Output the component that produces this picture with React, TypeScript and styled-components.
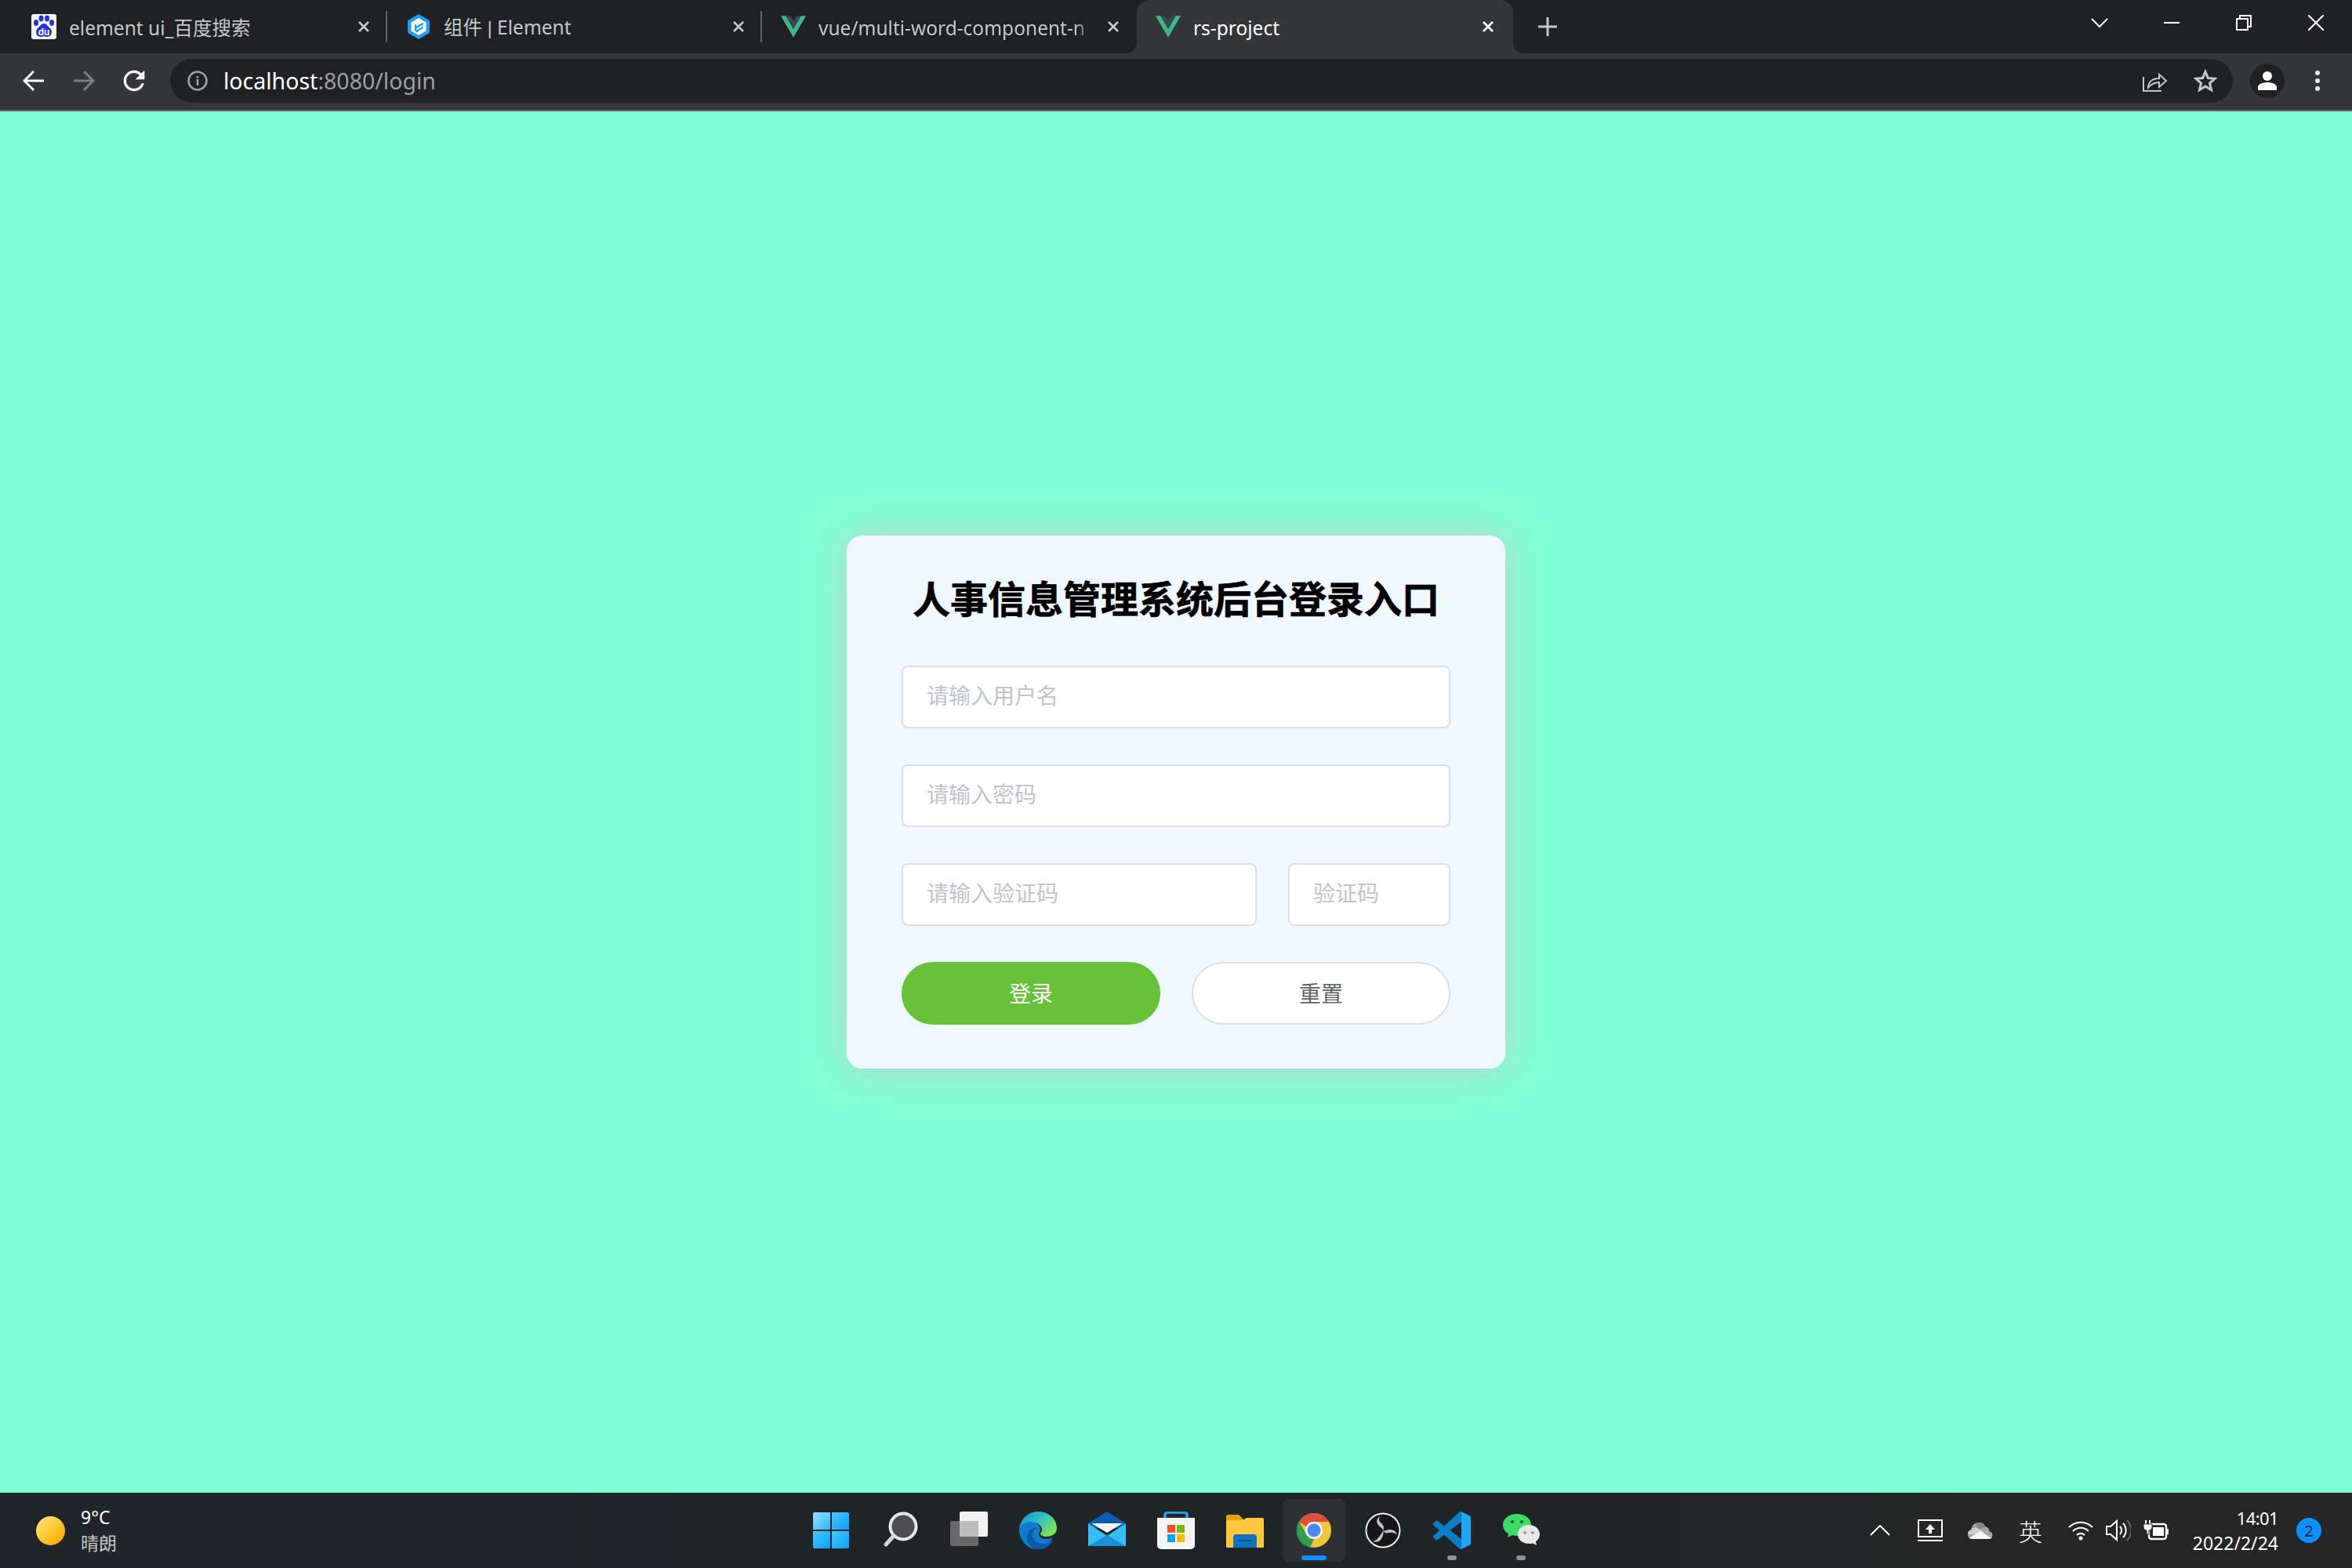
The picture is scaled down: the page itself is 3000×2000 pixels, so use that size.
import React from 'react';
import styled, { createGlobalStyle } from 'styled-components';

const GlobalStyle = createGlobalStyle`
  html, body {
    margin: 0;
    padding: 0;
    background: #7fffd4;
  }
  * {
    box-sizing: border-box;
  }
`;

const UI_FONT = `"Noto Sans", "Noto Sans CJK SC", sans-serif`;
const CJK_FONT = `"Liberation Sans", "Noto Sans CJK SC", sans-serif`;

const Screen = styled.div`
  width: 3000px;
  height: 2000px;
  display: flex;
  flex-direction: column;
  overflow: hidden;
  font-family: ${UI_FONT};
`;

/* ---- browser chrome ---- */

const TabStrip = styled.div`
  height: 68px;
  flex: none;
  display: flex;
  align-items: stretch;
  padding-left: 16px;
  background: #202124;
`;

const Tab = styled.div<{ $active?: boolean; $divider?: boolean }>`
  position: relative;
  width: ${p => (p.$active ? 480 : 478)}px;
  display: flex;
  align-items: center;
  padding-left: 24px;
  padding-right: ${p => (p.$active ? 24 : p.$divider ? 0 : 22)}px;
  color: ${p => (p.$active ? '#ffffff' : '#c4c7cb')};
  background: ${p => (p.$active ? '#35363a' : 'transparent')};
  border-radius: ${p => (p.$active ? '16px 16px 0 0' : '0')};

  ${p =>
    p.$active &&
    `
    &::before, &::after {
      content: '';
      position: absolute;
      bottom: 0;
      width: 14px;
      height: 14px;
    }
    &::before {
      left: -14px;
      background: radial-gradient(circle at 0 0, transparent 14px, #35363a 14.5px);
    }
    &::after {
      right: -14px;
      background: radial-gradient(circle at 100% 0, transparent 14px, #35363a 14.5px);
    }
  `}
`;

const Favicon = styled.svg`
  width: 32px;
  height: 32px;
  flex: none;
  margin-right: 16px;
`;

const TabTitle = styled.div<{ $fade?: boolean }>`
  flex: 1;
  min-width: 0;
  margin-right: 17px;
  padding-top: 3px;
  font-size: 24.5px;
  line-height: 32px;
  white-space: nowrap;
  overflow: hidden;
  ${p =>
    p.$fade &&
    `mask-image: linear-gradient(to right, #000 calc(100% - 24px), transparent);`}
`;

const TitlePipe = styled.span`
  font-family: "Liberation Sans", sans-serif;
`;

const TabClose = styled.svg`
  width: 16px;
  height: 16px;
  flex: none;
`;

const TabDivider = styled.div`
  width: 2px;
  height: 40px;
  flex: none;
  margin-left: 20px;
  background: #5f6368;
`;

const NewTab = styled.svg`
  width: 24px;
  height: 24px;
  margin-left: 32px;
  align-self: center;
`;

const WindowControls = styled.div`
  margin-left: auto;
  display: flex;
`;

const WindowButton = styled.div`
  width: 92px;
  height: 58px;
  display: flex;
  align-items: center;
  justify-content: center;
`;

const Toolbar = styled.div`
  height: 74px;
  flex: none;
  display: flex;
  align-items: center;
  padding: 0 12px 2px 11px;
  gap: 12px;
  background: #35363a;
  border-bottom: 2px solid #5c5f63;
`;

const NavGroup = styled.div`
  display: flex;
`;

const ToolButton = styled.div`
  width: 64px;
  height: 56px;
  display: flex;
  align-items: center;
  justify-content: center;
`;

const AddressBar = styled.div`
  flex: 1;
  height: 56px;
  margin-left: 2px;
  display: flex;
  align-items: center;
  padding: 0 3px 0 22px;
  border-radius: 28px;
  background: #202124;
`;

const Url = styled.div`
  margin-left: 20px;
  font-size: 28.5px;
  line-height: 40px;
  color: #9aa0a6;
`;

const UrlHost = styled.span`
  color: #ffffff;
`;

const AddressActions = styled.div`
  margin-left: auto;
  display: flex;
`;

const Avatar = styled.div`
  width: 44px;
  height: 44px;
  border-radius: 50%;
  display: flex;
  align-items: center;
  justify-content: center;
  background: #202124;
`;

const MenuDots = styled.div`
  display: flex;
  flex-direction: column;
  gap: 4px;
`;

const MenuDot = styled.div`
  width: 6px;
  height: 6px;
  border-radius: 50%;
  background: #e8eaed;
`;

/* ---- login page ---- */

const Page = styled.main`
  flex: 1;
  display: flex;
  align-items: center;
  justify-content: center;
  background: #7fffd4;
`;

const LoginCard = styled.form`
  width: 840px;
  height: 680px;
  padding: 51px 70px 0;
  border-radius: 20px;
  background: #f0f8ff;
  box-shadow: 0 0 50px #c6cfcc;
`;

const Heading = styled.h1`
  margin: 0 0 51px;
  font-family: ${CJK_FONT};
  font-size: 48px;
  line-height: 64px;
  font-weight: 700;
  text-align: center;
  color: #000000;
  -webkit-text-stroke: 0.7px #000000;
`;

const Fields = styled.div`
  display: flex;
  flex-direction: column;
  gap: 46px;
`;

const CaptchaRow = styled.div`
  display: grid;
  grid-template-columns: 1fr 207px;
  gap: 40px;
`;

const ActionRow = styled.div`
  display: grid;
  grid-template-columns: 1fr 1fr;
  gap: 40px;
`;

const TextInput = styled.input`
  width: 100%;
  height: 80px;
  padding: 0 30px;
  border: 2px solid #dcdfe6;
  border-radius: 8px;
  outline: none;
  background: #ffffff;
  font-family: ${CJK_FONT};
  font-size: 28px;
  color: #606266;

  &::placeholder {
    color: #c0c4cc;
    opacity: 1;
  }
`;

const PillButton = styled.button<{ $primary?: boolean }>`
  height: 80px;
  padding: 0 0 2px;
  border-radius: 40px;
  border: 2px solid ${p => (p.$primary ? '#67c23a' : '#dcdfe6')};
  background: ${p => (p.$primary ? '#67c23a' : '#ffffff')};
  color: ${p => (p.$primary ? '#ffffff' : '#606266')};
  font-family: ${CJK_FONT};
  font-size: 28px;
`;

/* ---- windows taskbar ---- */

const Taskbar = styled.footer`
  height: 96px;
  flex: none;
  display: grid;
  grid-template-columns: 1fr auto 1fr;
  align-items: center;
  background: linear-gradient(to right, #1f2528 0%, #1f2427 60%, #262626 85%);
`;

const Weather = styled.div`
  display: flex;
  align-items: center;
  padding-left: 46px;
  gap: 20px;
`;

const SunIcon = styled.div`
  width: 37px;
  height: 37px;
  border-radius: 50%;
  background: linear-gradient(135deg, #ffe27a 10%, #ffc934 50%, #ff9d00 95%);
`;

const WeatherText = styled.div`
  font-size: 23px;
  line-height: 33px;
  color: #ffffff;
`;

const WeatherNote = styled.div`
  color: #c8c8c8;
`;

const AppList = styled.div`
  display: flex;
`;

const AppSlot = styled.div<{ $running?: boolean }>`
  position: relative;
  width: 80px;
  height: 80px;
  margin: 0 4px;
  display: flex;
  align-items: center;
  justify-content: center;
  border-radius: 8px;
  background: ${p => (p.$running ? '#2d3134' : 'transparent')};
`;

const AppIcon = styled.svg`
  width: 48px;
  height: 48px;
`;

const RunDot = styled.div<{ $focused?: boolean }>`
  position: absolute;
  bottom: 2px;
  left: 50%;
  width: ${p => (p.$focused ? 32 : 12)}px;
  height: 6px;
  margin-left: ${p => (p.$focused ? -16 : -6)}px;
  border-radius: 3px;
  background: ${p => (p.$focused ? '#0a90ff' : '#8f9193')};
`;

const Tray = styled.div`
  display: flex;
  align-items: center;
  justify-content: flex-end;
  padding-right: 39px;
`;

const TraySlot = styled.div<{ $narrow?: boolean }>`
  width: ${p => (p.$narrow ? 48 : 64)}px;
  height: 48px;
  display: flex;
  align-items: center;
  justify-content: center;
`;

const ImeLabel = styled.div`
  font-family: "Noto Sans CJK SC", sans-serif;
  font-weight: 300;
  font-size: 30px;
  line-height: 48px;
  color: #ffffff;
`;

const WideTray = styled.div`
  display: flex;
  margin-left: 8px;
`;

const Clock = styled.div`
  margin-left: 20px;
  width: 112px;
  text-align: right;
  font-size: 23px;
  line-height: 32px;
  color: #ffffff;
  white-space: nowrap;
`;

const ClockTime = styled.div`
  font-size: 22px;
  letter-spacing: -0.6px;
`;

const Badge = styled.div`
  width: 32px;
  height: 32px;
  margin-left: 23px;
  border-radius: 50%;
  display: flex;
  align-items: center;
  justify-content: center;
  background: #0a90ff;
  color: #10243a;
  font-size: 20px;
`;

/* ---- drawings ---- */

const BaiduIcon = () => (
  <Favicon viewBox="0 0 32 32">
    <rect width="32" height="32" rx="3" fill="#fff" />
    <g fill="#2932e1">
      <ellipse cx="6" cy="11" rx="3" ry="4" />
      <ellipse cx="12.5" cy="5.5" rx="3" ry="4" />
      <ellipse cx="20" cy="5.5" rx="3" ry="4" />
      <ellipse cx="26" cy="11" rx="3" ry="4" />
      <path d="M16 12c-4 0-5 4-8 6-3 3-3 10 3 11 2 .5 3-.5 5-.5s3 1 5 .5c6-1 6-8 3-11-3-2-4-6-8-6z" />
    </g>
    <text x="16" y="27" textAnchor="middle" fontSize="12" fontWeight="700" fontFamily="Liberation Sans, sans-serif" fill="#fff">
      du
    </text>
  </Favicon>
);

const ElementIcon = () => (
  <Favicon viewBox="0 0 32 32">
    <path d="M16 0l13 7.500a2 2 0 0 1 1 1.700v13.600a2 2 0 0 1-1 1.700L16 32 3 24.500a2 2 0 0 1-1-1.700V9.200a2 2 0 0 1 1-1.700z" fill="#1e9ef5" />
    <path d="M16 5l9.500 5.500v11L16 27l-9.500-5.500v-11z" fill="#fff" />
    <path d="M22 10.500l-9 5v3l9-5zM22 15.500l-9 5v2.500l9-5z" fill="#1e9ef5" />
    <path d="M12 13v8l3 2" stroke="#1e9ef5" strokeWidth="2" fill="none" />
  </Favicon>
);

const VueIcon = () => (
  <Favicon viewBox="0 0 256 256">
    <g transform="translate(0 18)">
      <path d="M204.800 0H256L128 220.800 0 0h50.560L128 132.480 204.800 0z" fill="#41b883" />
      <path d="M50.560 0L128 133.120 204.800 0h-47.360L128 51.200 97.920 0H50.560z" fill="#35495e" />
    </g>
  </Favicon>
);

const CloseIcon = () => (
  <TabClose viewBox="0 0 16 16">
    <path d="M2 2l12 12M14 2L2 14" stroke="currentColor" strokeWidth="2.600" fill="none" />
  </TabClose>
);

const ArrowIcon = ({ color, flip }: { color: string; flip?: boolean }) => (
  <svg width="28" height="28" viewBox="0 0 28 28" style={flip ? { transform: 'scaleX(-1)' } : undefined}>
    <path d="M27 14H3M14 2L2 14l12 12" stroke={color} strokeWidth="3" fill="none" />
  </svg>
);

const ReloadIcon = () => (
  <svg width="40" height="40" viewBox="0 0 24 24" fill="#ffffff">
    <path d="M17.650 6.350A7.958 7.958 0 0 0 12 4c-4.420 0-7.990 3.580-7.990 8s3.570 8 7.990 8c3.730 0 6.840-2.550 7.730-6h-2.080A5.990 5.990 0 0 1 12 18c-3.310 0-6-2.690-6-6s2.690-6 6-6c1.660 0 3.140.690 4.220 1.780L13 11h7V4l-2.350 2.350z" />
  </svg>
);

const InfoIcon = () => (
  <svg width="26" height="26" viewBox="0 0 26 26">
    <circle cx="13" cy="13" r="11.500" stroke="#a0a3a7" strokeWidth="2.500" fill="none" />
    <rect x="11.700" y="11" width="2.600" height="8" fill="#a0a3a7" />
    <rect x="11.700" y="7" width="2.600" height="2.600" fill="#a0a3a7" />
  </svg>
);

const ShareIcon = () => (
  <svg width="32" height="30" viewBox="0 0 32 30" fill="none" stroke="#c4c7cb" strokeWidth="2">
    <path d="M1 10v18h23" />
    <path d="M7 24c0-8 6-12 14-12V7l9 8-9 8v-6c-6 0-10 2-14 7z" />
  </svg>
);

const StarIcon = () => (
  <svg width="30" height="30" viewBox="0 0 30 30">
    <path
      d="M15 3.500l3.400 8.100 8.800.7-6.700 5.800 2 8.600L15 22.100l-7.500 4.600 2-8.600-6.700-5.800 8.800-.7z"
      fill="none"
      stroke="#c4c7cb"
      strokeWidth="3"
    />
  </svg>
);

const PersonIcon = () => (
  <svg width="26" height="26" viewBox="0 0 26 26" fill="#ffffff">
    <circle cx="13" cy="7" r="6" />
    <path d="M1 25v-4c0-4 7-6 12-6s12 2 12 6v4z" />
  </svg>
);

const WindowsLogo = () => (
  <AppIcon viewBox="0 0 48 48">
    <defs>
      <linearGradient id="winA" x1="0" y1="0" x2="1" y2="1">
        <stop offset="0" stopColor="#9be2ff" />
        <stop offset="1" stopColor="#29b6fb" />
      </linearGradient>
      <linearGradient id="winB" x1="0" y1="0" x2="1" y2="1">
        <stop offset="0" stopColor="#45cbff" />
        <stop offset="1" stopColor="#0f9cfa" />
      </linearGradient>
    </defs>
    <path d="M1 3a2 2 0 0 1 2-2h20v22H1z" fill="url(#winA)" />
    <path d="M25 1h20a2 2 0 0 1 2 2v20H25z" fill="url(#winB)" />
    <path d="M1 25h22v22H3a2 2 0 0 1-2-2z" fill="url(#winB)" />
    <path d="M25 25h22v20a2 2 0 0 1-2 2H25z" fill="url(#winB)" />
  </AppIcon>
);

const SearchLogo = () => (
  <AppIcon viewBox="0 0 48 48">
    <circle cx="28" cy="19" r="16.500" fill="#4d4f53" stroke="#e8e8e8" strokeWidth="4" />
    <path d="M15 32L6 42" stroke="#d8d8d8" strokeWidth="5" strokeLinecap="round" />
  </AppIcon>
);

const TaskViewLogo = () => (
  <AppIcon viewBox="0 0 48 48">
    <rect x="0" y="12" width="36" height="32" rx="2" fill="#69696b" />
    <rect x="12" y="0" width="36" height="32" rx="2" fill="#f2f2f2" />
    <rect x="12" y="12" width="24" height="20" fill="#bcbcbc" />
  </AppIcon>
);

const EdgeLogo = () => (
  <AppIcon viewBox="0 0 48 48">
    <defs>
      <linearGradient id="edgeTop" x1="0" y1="0" x2="1" y2="0.600">
        <stop offset="0" stopColor="#0f8dc8" />
        <stop offset="0.550" stopColor="#2fc2c0" />
        <stop offset="1" stopColor="#7fe05a" />
      </linearGradient>
    </defs>
    <path d="M24 0c13 0 24 9 24 21 0 7-6 11-13 11-5 0-8-2-8-4 0-1 2-2 2-5 0-5-5-9-11-9S1 18 0 23C1 10 11 0 24 0z" fill="url(#edgeTop)" />
    <path d="M0 23c1-6 8-10 14-10 7 0 13 4 13 10 0 2-2 4-2 6 0 4 5 6 10 6 3 0 6-1 8-2-4 9-12 15-21 15C10 48 0 36 0 23z" fill="#0f7bcf" />
    <path d="M18 47c-5-3-8-9-8-15 0-7 6-12 13-11-4 2-6 5-6 9 0 6 6 11 14 11 4 0 8-1 12-3-4 6-10 10-18 10-3 0-5 0-7-1z" fill="#0c59a4" />
  </AppIcon>
);

const MailLogo = () => (
  <AppIcon viewBox="0 0 48 48">
    <path d="M0 15L24 0l24 15v6H0z" fill="#0b5cad" />
    <path d="M4 15h40L24 27z" fill="#f2f4f6" />
    <path d="M0 15l24 16 24-16v29H0z" fill="#36bdf3" />
    <path d="M0 44l24-14 24 14z" fill="#1a8fdc" />
  </AppIcon>
);

const StoreLogo = () => (
  <AppIcon viewBox="0 0 48 48">
    <path d="M10 10V4a3 3 0 0 1 3-3h22a3 3 0 0 1 3 3v6" fill="none" stroke="#25a3e8" strokeWidth="3.500" />
    <path d="M0 8h48v35a5 5 0 0 1-5 5H5a5 5 0 0 1-5-5z" fill="#f4f4f4" />
    <rect x="13" y="17" width="10" height="10" fill="#f25022" />
    <rect x="25" y="17" width="10" height="10" fill="#7fba00" />
    <rect x="13" y="29" width="10" height="10" fill="#00a4ef" />
    <rect x="25" y="29" width="10" height="10" fill="#ffb900" />
  </AppIcon>
);

const FolderLogo = () => (
  <AppIcon viewBox="0 0 48 48">
    <path d="M0 6a2 2 0 0 1 2-2h14l6 6v6H0z" fill="#e3a008" />
    <path d="M0 11h21l5-3h20a2 2 0 0 1 2 2v35a1 1 0 0 1-1 1H1a1 1 0 0 1-1-1z" fill="#fdc73f" />
    <path d="M9 46V33a4 4 0 0 1 4-4h22a4 4 0 0 1 4 4v13z" fill="#1273bf" />
    <rect x="15" y="36" width="18" height="2" fill="#0c4f87" />
  </AppIcon>
);

const ChromeLogo = () => (
  <AppIcon viewBox="0 0 48 48">
    <circle cx="24" cy="24" r="22" fill="#f0c53a" />
    <path d="M24 2a22 22 0 0 1 19 11H24a11 11 0 0 0-10 6L5 13A22 22 0 0 1 24 2z" fill="#d9503f" />
    <path d="M5 13l10 17a11 11 0 0 0 9 5l-5 11A22 22 0 0 1 5 13z" fill="#2f9e53" />
    <circle cx="24" cy="24" r="11" fill="#f5f5f5" />
    <circle cx="24" cy="24" r="8.500" fill="#4a88ee" />
  </AppIcon>
);

const ObsLogo = () => (
  <AppIcon viewBox="0 0 48 48">
    <circle cx="24" cy="24" r="21.500" fill="#17171a" stroke="#efefef" strokeWidth="2" />
    <g fill="#c4c4c4">
      <path d="M20 6c-7 5-3 11 1 14 2 1.500 3 3 3 4 2-3 1-6-2-9-3-2-4-5-2-9z" />
      <path d="M42 30c-2-8-9-8-14-6-2 1-3 1-4 0 1 3 4 4 8 3 4-1 7 0 10 3z" />
      <path d="M11 38c8 3 12-3 13-8 .5-2 1-4 0-6-1 3-3 6-5 8-2 3-5 6-8 6z" />
    </g>
  </AppIcon>
);

const CodeLogo = () => (
  <AppIcon viewBox="0 0 24 24">
    <path
      d="M23.150 2.587L18.210.21a1.494 1.494 0 0 0-1.705.29l-9.460 8.630-4.120-3.128a.999.999 0 0 0-1.276.057L.327 7.261A1 1 0 0 0 .326 8.740L3.899 12 .326 15.260a1 1 0 0 0 .001 1.479L1.650 17.940a.999.999 0 0 0 1.276.057l4.120-3.128 9.460 8.630a1.492 1.492 0 0 0 1.704.29l4.942-2.377A1.500 1.500 0 0 0 24 20.060V3.939a1.500 1.500 0 0 0-.850-1.352zm-5.146 14.861L10.826 12l7.178-5.448v10.896z"
      fill="#0d7cc6"
    />
    <path
      d="M18 .1l5.150 2.487A1.500 1.500 0 0 1 24 3.940V20.060a1.500 1.500 0 0 1-.850 1.350L18 23.900z"
      fill="#22a6f2"
    />
  </AppIcon>
);

const WeChatLogo = () => (
  <AppIcon viewBox="0 0 48 48">
    <path d="M19 3C9 3 1 9 1 17c0 5 3 9 7 11l-1 5 6-3c2 .5 4 1 6 1 10 0 18-6 18-14S29 3 19 3z" fill="#3ddc68" />
    <circle cx="13" cy="13" r="2" fill="#14592b" />
    <circle cx="25" cy="13" r="2" fill="#14592b" />
    <path d="M34 17c-8 0-14 5-14 12s6 12 14 12c2 0 3 0 5-.5l5 2.500-1-5c3-2 5-5 5-9 0-7-6-12-14-12z" fill="#e9e9e9" />
    <circle cx="29" cy="27" r="1.800" fill="#8a8a8a" />
    <circle cx="39" cy="27" r="1.800" fill="#8a8a8a" />
  </AppIcon>
);

const UploadTrayIcon = () => (
  <svg width="32" height="28" viewBox="0 0 32 28" fill="none" stroke="#ffffff" strokeWidth="2">
    <rect x="1" y="1" width="30" height="21" />
    <path d="M0 27h32" />
    <path d="M16 6l6 7h-4v5h-4v-5h-4z" fill="#ffffff" stroke="none" />
  </svg>
);

const CloudTrayIcon = () => (
  <svg width="32" height="22" viewBox="0 0 32 22">
    <clipPath id="cloudShape">
      <path d="M6 22a6 6 0 0 1-1.500-11.800A9 9 0 0 1 14 1a8 8 0 0 1 8 5 7 7 0 0 1 5.500 6.500A4.800 4.800 0 0 1 27 22z" />
    </clipPath>
    <g clipPath="url(#cloudShape)">
      <rect width="32" height="22" fill="#a6a6a6" />
      <path d="M0 8h14l8 8H0z" fill="#cfcfcf" />
      <path d="M8 0h10l6 6-10 4z" fill="#858585" />
      <path d="M0 22l16-10 16 10z" fill="#f6f6f6" />
    </g>
  </svg>
);

const WifiTrayIcon = () => (
  <svg width="32" height="28" viewBox="0 0 32 28" fill="none" stroke="#ffffff" strokeWidth="2">
    <path d="M1 10a21 21 0 0 1 30 0" />
    <path d="M6 15a14 14 0 0 1 20 0" />
    <path d="M11 20a7 7 0 0 1 10 0" />
    <circle cx="16" cy="24" r="2.500" fill="#ffffff" stroke="none" />
  </svg>
);

const SpeakerTrayIcon = () => (
  <svg width="32" height="30" viewBox="0 0 32 30" fill="none" stroke="#ffffff" strokeWidth="2">
    <path d="M1 10h5l8-7v24l-8-7H1z" />
    <path d="M18 10a7 7 0 0 1 0 10" />
    <path d="M22 6a13 13 0 0 1 0 18" />
    <path d="M27 2a19 19 0 0 1 0 26" stroke="#666666" />
  </svg>
);

const BatteryTrayIcon = () => (
  <svg width="32" height="26" viewBox="0 0 32 26">
    <rect x="7" y="5" width="22" height="19" rx="3" fill="none" stroke="#ffffff" strokeWidth="2.400" />
    <rect x="12" y="9" width="14" height="11" fill="#ffffff" />
    <rect x="29" y="11" width="3" height="7" fill="#ffffff" />
    <rect x="2" y="0" width="2" height="6" fill="#ffffff" />
    <rect x="7" y="0" width="2" height="6" fill="#ffffff" />
    <path d="M0 5h11v4a4 4 0 0 1-4 4v5H4v-5a4 4 0 0 1-4-4z" fill="#ffffff" stroke="#262626" strokeWidth="1" />
  </svg>
);

export default function App() {
  return (
    <Screen>
      <GlobalStyle />

      <TabStrip>
        <Tab $divider>
          <BaiduIcon />
          <TabTitle>element ui_百度搜索</TabTitle>
          <CloseIcon />
          <TabDivider />
        </Tab>
        <Tab $divider>
          <ElementIcon />
          <TabTitle>
            组件 <TitlePipe>|</TitlePipe> Element
          </TabTitle>
          <CloseIcon />
          <TabDivider />
        </Tab>
        <Tab>
          <VueIcon />
          <TabTitle $fade>vue/multi-word-component-n</TabTitle>
          <CloseIcon />
        </Tab>
        <Tab $active>
          <VueIcon />
          <TabTitle>rs-project</TabTitle>
          <CloseIcon />
        </Tab>
        <NewTab viewBox="0 0 24 24">
          <path d="M12 0v24M0 12h24" stroke="#c4c7cb" strokeWidth="3" />
        </NewTab>
        <WindowControls>
          <WindowButton>
            <svg width="22" height="14" viewBox="0 0 22 14">
              <path d="M1 2l10 10L21 2" stroke="#fff" strokeWidth="2" fill="none" />
            </svg>
          </WindowButton>
          <WindowButton>
            <svg width="20" height="2" viewBox="0 0 20 2">
              <rect width="20" height="2" fill="#fff" />
            </svg>
          </WindowButton>
          <WindowButton>
            <svg width="20" height="20" viewBox="0 0 20 20" fill="none" stroke="#fff" strokeWidth="2">
              <rect x="1" y="5" width="14" height="14" />
              <path d="M5 5V1h14v14h-4" />
            </svg>
          </WindowButton>
          <WindowButton>
            <svg width="20" height="20" viewBox="0 0 20 20">
              <path d="M0 0l20 20M20 0L0 20" stroke="#fff" strokeWidth="2" />
            </svg>
          </WindowButton>
        </WindowControls>
      </TabStrip>

      <Toolbar>
        <NavGroup>
          <ToolButton>
            <ArrowIcon color="#ffffff" />
          </ToolButton>
          <ToolButton>
            <ArrowIcon color="#7d7f83" flip />
          </ToolButton>
          <ToolButton>
            <ReloadIcon />
          </ToolButton>
        </NavGroup>
        <AddressBar>
          <InfoIcon />
          <Url>
            <UrlHost>localhost</UrlHost>:8080/login
          </Url>
          <AddressActions>
            <ToolButton>
              <ShareIcon />
            </ToolButton>
            <ToolButton>
              <StarIcon />
            </ToolButton>
          </AddressActions>
        </AddressBar>
        <NavGroup>
          <ToolButton>
            <Avatar>
              <PersonIcon />
            </Avatar>
          </ToolButton>
          <ToolButton>
            <MenuDots>
              <MenuDot />
              <MenuDot />
              <MenuDot />
            </MenuDots>
          </ToolButton>
        </NavGroup>
      </Toolbar>

      <Page>
        <LoginCard onSubmit={e => e.preventDefault()}>
          <Heading>人事信息管理系统后台登录入口</Heading>
          <Fields>
            <TextInput placeholder="请输入用户名" />
            <TextInput placeholder="请输入密码" />
            <CaptchaRow>
              <TextInput placeholder="请输入验证码" />
              <TextInput placeholder="验证码" />
            </CaptchaRow>
            <ActionRow>
              <PillButton $primary>登录</PillButton>
              <PillButton type="button">重置</PillButton>
            </ActionRow>
          </Fields>
        </LoginCard>
      </Page>

      <Taskbar>
        <Weather>
          <SunIcon />
          <WeatherText>
            9°C
            <WeatherNote>晴朗</WeatherNote>
          </WeatherText>
        </Weather>

        <AppList>
          <AppSlot><WindowsLogo /></AppSlot>
          <AppSlot><SearchLogo /></AppSlot>
          <AppSlot><TaskViewLogo /></AppSlot>
          <AppSlot><EdgeLogo /></AppSlot>
          <AppSlot><MailLogo /></AppSlot>
          <AppSlot><StoreLogo /></AppSlot>
          <AppSlot><FolderLogo /></AppSlot>
          <AppSlot $running>
            <ChromeLogo />
            <RunDot $focused />
          </AppSlot>
          <AppSlot><ObsLogo /></AppSlot>
          <AppSlot>
            <CodeLogo />
            <RunDot />
          </AppSlot>
          <AppSlot>
            <WeChatLogo />
            <RunDot />
          </AppSlot>
        </AppList>

        <Tray>
          <TraySlot>
            <svg width="26" height="14" viewBox="0 0 26 14">
              <path d="M1 13L13 1l12 12" stroke="#fff" strokeWidth="2" fill="none" />
            </svg>
          </TraySlot>
          <TraySlot><UploadTrayIcon /></TraySlot>
          <TraySlot><CloudTrayIcon /></TraySlot>
          <TraySlot><ImeLabel>英</ImeLabel></TraySlot>
          <WideTray>
            <TraySlot $narrow><WifiTrayIcon /></TraySlot>
            <TraySlot $narrow><SpeakerTrayIcon /></TraySlot>
            <TraySlot $narrow><BatteryTrayIcon /></TraySlot>
          </WideTray>
          <Clock>
            <ClockTime>14:01</ClockTime>
            2022/2/24
          </Clock>
          <Badge>2</Badge>
        </Tray>
      </Taskbar>
    </Screen>
  );
}
